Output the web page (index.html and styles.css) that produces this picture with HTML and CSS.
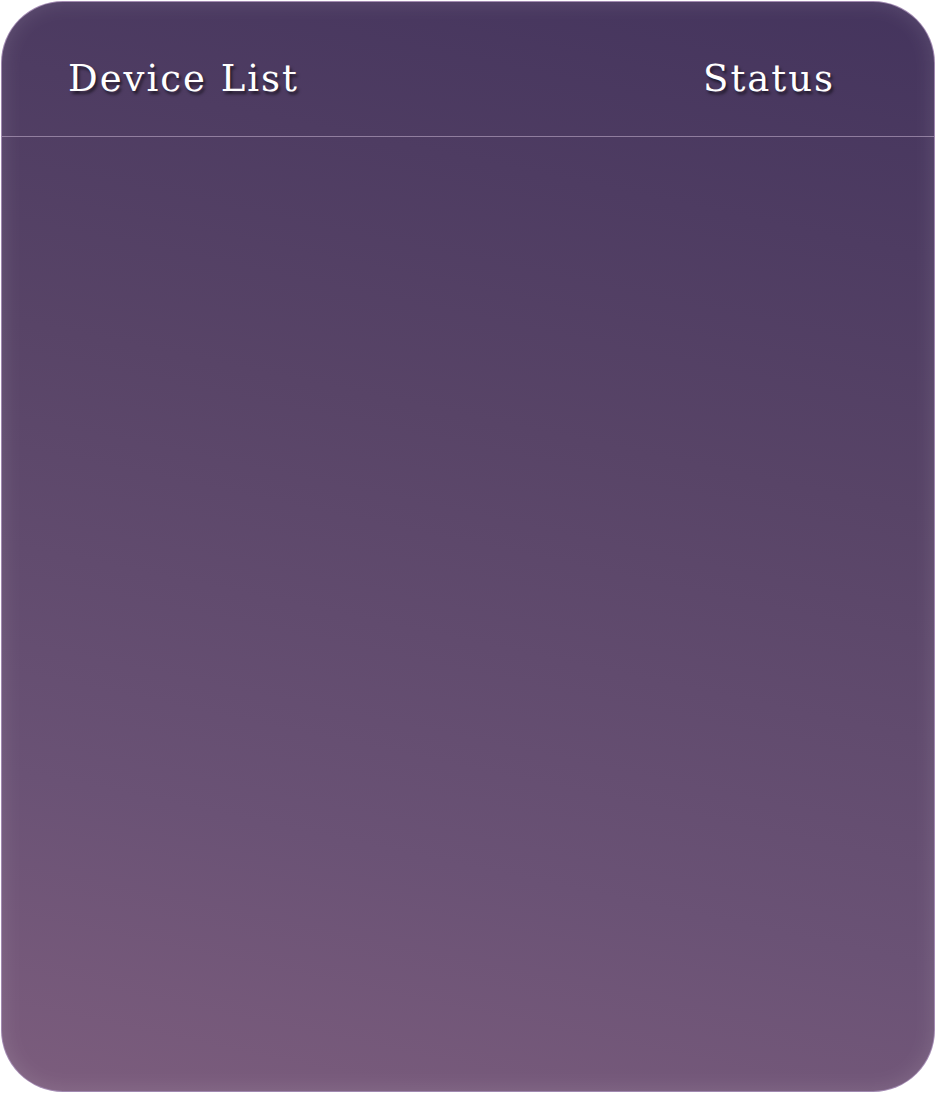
FILE: index.html
```html
<!DOCTYPE html>
<html>
<head>
<meta charset="utf-8">
<link rel="stylesheet" href="styles.css">
</head>
<body>
<div class="card">
  <div class="header">
    <div class="title">Device List</div>
    <div class="title">Status</div>
  </div>
  <div class="body"></div>
</div>
</body>
</html>
```
FILE: styles.css
```css
html, body {
  margin: 0;
  padding: 0;
  background: #ffffff;
}
body {
  width: 936px;
  height: 1094px;
  padding: 1px;
  box-sizing: border-box;
}
.card {
  width: 934px;
  height: 1091px;
  box-sizing: border-box;
  border-radius: 62px;
  border: 1.5px solid rgba(170, 145, 185, 0.9);
  background: linear-gradient(192deg, #44345d 0%, #584467 40%, #6a5275 75%, #7c5d7d 100%);
  box-shadow: inset 0 0 22px rgba(255, 255, 255, 0.13);
  overflow: hidden;
  display: flex;
  flex-direction: column;
}
.header {
  height: 135px;
  box-sizing: border-box;
  border-bottom: 1px solid rgba(200, 180, 210, 0.55);
  display: flex;
  justify-content: space-between;
  align-items: flex-start;
  padding: 55px 99px 0 66px;
}
.title {
  font-family: "DejaVu Serif", serif;
  font-size: 37px;
  color: #ffffff;
  text-shadow: 2px 3px 3px rgba(0, 0, 0, 0.55);
  letter-spacing: 2px;
}
.body {
  flex: 1;
}
```
